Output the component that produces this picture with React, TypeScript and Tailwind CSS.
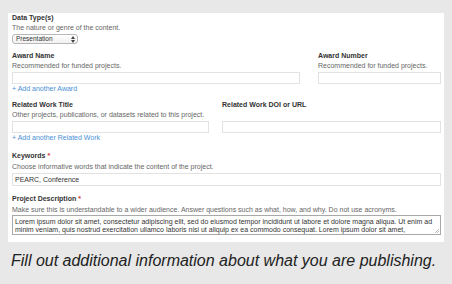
import React from 'react';

const font = { fontFamily: '"Liberation Sans", Arial, sans-serif' };

const Label = ({ children, required }: { children: React.ReactNode; required?: boolean }) => (
  <div className="text-[7px] leading-[9px] font-bold text-[#333]">
    {children}
    {required && <span className="text-[#d9343a] ml-[2px]">*</span>}
  </div>
);

const Help = ({ children }: { children: React.ReactNode }) => (
  <div className="mt-[1px] text-[7px] leading-[10px] text-[#666] whitespace-nowrap">{children}</div>
);

const Input = ({ value }: { value?: string }) => (
  <div className="mt-[1px] h-[12px] border border-[#e2e2e2] bg-white px-[2px] text-[7px] leading-[10px] text-[#333]">
    {value}
  </div>
);

const AddLink = ({ children }: { children: React.ReactNode }) => (
  <div className="text-[7px] leading-[10px] text-[#4a8fd6]">+ {children}</div>
);

const App = () => {
  return (
    <div className="w-[452px] h-[284px] bg-[#e8e8e8] overflow-hidden" style={font}>
      <div className="ml-[8px] mt-[13px] w-[436px] h-[229px] bg-white pl-[4px] pr-[3px] overflow-hidden">
        {/* data type */}
        <div>
          <Label>Data Type(s)</Label>
          <Help>The nature or genre of the content.</Help>
          <div className="mt-[1px] w-[66px] h-[10px] rounded-[3px] border border-[#b8b8b8] bg-gradient-to-b from-white to-[#f0f0f0] flex items-center justify-between pl-[3px] pr-[2px] text-[6.5px] leading-[8px] text-[#333]">
            <span>Presentation</span>
            <svg width="4" height="7" viewBox="0 0 4 7">
              <path d="M0 3 L2 0 L4 3 Z M0 4 L2 7 L4 4 Z" fill="#444" />
            </svg>
          </div>
        </div>

        {/* award */}
        <div className="mt-[7px] flex gap-[18px]">
          <div className="w-[288px]">
            <Label>Award Name</Label>
            <Help>Recommended for funded projects.</Help>
            <Input />
            <AddLink>Add another Award</AddLink>
          </div>
          <div className="w-[123px]">
            <Label>Award Number</Label>
            <Help>Recommended for funded projects.</Help>
            <Input />
          </div>
        </div>

        {/* related work */}
        <div className="mt-[6px] flex gap-[13px]">
          <div className="w-[197px]">
            <Label>Related Work Title</Label>
            <Help>Other projects, publications, or datasets related to this project.</Help>
            <Input />
            <AddLink>Add another Related Work</AddLink>
          </div>
          <div className="w-[219px]">
            <Label>Related Work DOI or URL</Label>
            <Help>&nbsp;</Help>
            <Input />
          </div>
        </div>

        {/* keywords */}
        <div className="mt-[8px]">
          <Label required>Keywords</Label>
          <div className="mt-[2px] text-[7px] leading-[10px] text-[#666]">
            Choose informative words that indicate the content of the project.
          </div>
          <div className="mt-[1px] h-[13px] border border-[#e2e2e2] px-[2px] text-[7px] leading-[11px] text-[#333]">
            PEARC, Conference
          </div>
        </div>

        {/* description */}
        <div className="mt-[8px]">
          <Label required>Project Description</Label>
          <div className="mt-[2px] text-[7px] leading-[9px] text-[#666] whitespace-nowrap">
            Make sure this is understandable to a wider audience. Answer questions such as what, how, and why. Do not use acronyms.
          </div>
          <div className="relative mt-[1px] h-[20px] border border-[#a9a9a9] px-[2px] pt-[2px] text-[7px] leading-[8px] text-[#333] overflow-hidden">
            Lorem ipsum dolor sit amet, consectetur adipiscing elit, sed do eiusmod tempor incididunt ut labore et dolore magna aliqua. Ut enim ad minim veniam, quis nostrud exercitation ullamco laboris nisi ut aliquip ex ea commodo consequat. Lorem ipsum dolor sit amet,
            <svg className="absolute right-[1px] bottom-[1px]" width="5" height="5" viewBox="0 0 5 5">
              <path d="M5 1 L1 5 M5 3 L3 5" stroke="#999" strokeWidth="0.6" />
            </svg>
          </div>
        </div>
      </div>

      <p className="mt-[10px] ml-[11px] text-[16px] leading-[18px] italic text-[#222] whitespace-nowrap">
        Fill out additional information about what you are publishing.
      </p>
    </div>
  );
};

export default App;
